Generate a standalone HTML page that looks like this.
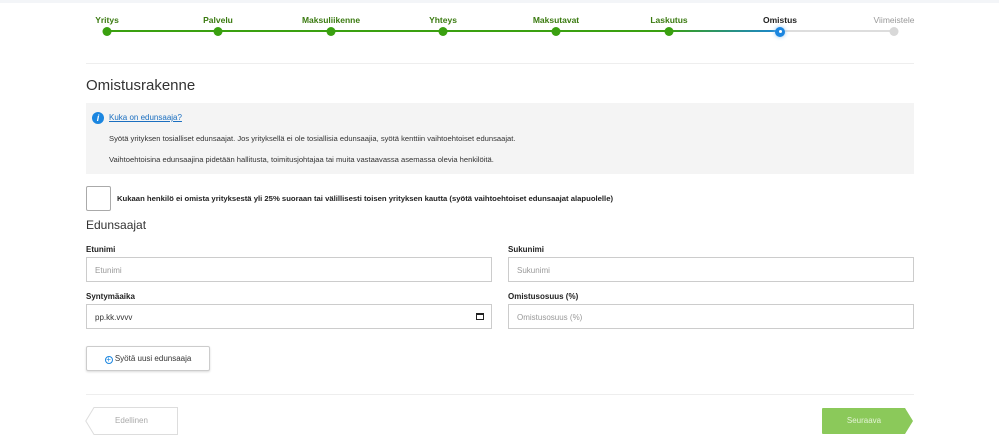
<!DOCTYPE html>
<html><head><meta charset="utf-8"><style>
*{box-sizing:border-box;margin:0;padding:0}
body{width:999px;height:442px;background:#fff;font-family:"Liberation Sans",sans-serif;color:#222;position:relative;overflow:hidden}
.a{position:absolute}
.lbl{font-size:8.5px;font-weight:bold;transform:translateX(-50%);white-space:nowrap;top:15px}
.dot{width:9px;height:9px;border-radius:50%;background:#3aa010;top:27px;transform:translateX(-50%)}
.inp{border:1px solid #ccc;height:25px;font-size:8px;color:#999;padding:8px 0 0 8px}
.fl{font-size:8px;font-weight:bold}
</style></head><body>
<div class="a" style="left:0;top:0;width:999px;height:3px;background:#f3f5f8"></div>
<div class="a" style="left:107px;top:30px;width:560px;height:2px;background:#3aa010"></div>
<div class="a" style="left:667px;top:30px;width:113px;height:2px;background:linear-gradient(90deg,#3aa010,#1b86d6)"></div>
<div class="a" style="left:780px;top:30px;width:114px;height:2px;background:#ddd"></div>
<div class="a lbl" style="left:107px;color:#3a7a10">Yritys</div>
<div class="a lbl" style="left:218px;color:#3a7a10">Palvelu</div>
<div class="a lbl" style="left:331px;color:#3a7a10">Maksuliikenne</div>
<div class="a lbl" style="left:443px;color:#3a7a10">Yhteys</div>
<div class="a lbl" style="left:556px;color:#3a7a10">Maksutavat</div>
<div class="a lbl" style="left:669px;color:#3a7a10">Laskutus</div>
<div class="a lbl" style="left:780px;color:#222">Omistus</div>
<div class="a lbl" style="left:894px;color:#999;font-weight:normal">Viimeistele</div>
<div class="a dot" style="left:107px"></div><div class="a dot" style="left:218px"></div><div class="a dot" style="left:331px"></div><div class="a dot" style="left:443px"></div><div class="a dot" style="left:556px"></div><div class="a dot" style="left:669px"></div>
<div class="a dot" style="left:780px;background:#1b86e0;width:10px;height:10px;box-shadow:0 0 4px #8cc4f0"></div>
<div class="a" style="left:779px;top:30px;width:3px;height:3px;border-radius:50%;background:#fff"></div>
<div class="a dot" style="left:894px;background:#d8d8d8"></div>
<div class="a" style="left:86px;top:63px;width:828px;height:1px;background:#eee"></div>
<div class="a" style="left:86px;top:77px;font-size:15px;color:#333">Omistusrakenne</div>
<div class="a" style="left:86px;top:103px;width:828px;height:71px;background:#f4f4f4"></div>
<div class="a" style="left:92px;top:112px;width:12px;height:12px;border-radius:50%;background:#1b86e0;color:#fff;font-size:9px;font-weight:bold;font-style:italic;text-align:center;line-height:12px">i</div>
<div class="a" style="left:109px;top:113px;font-size:8px;color:#1b6fc0;text-decoration:underline">Kuka on edunsaaja?</div>
<div class="a" style="left:109px;top:134px;font-size:7.6px;color:#333">Syötä yrityksen tosialliset edunsaajat. Jos yrityksellä ei ole tosiallisia edunsaajia, syötä kenttiin vaihtoehtoiset edunsaajat.</div>
<div class="a" style="left:109px;top:155px;font-size:7.6px;color:#333">Vaihtoehtoisina edunsaajina pidetään hallitusta, toimitusjohtajaa tai muita vastaavassa asemassa olevia henkilöitä.</div>
<div class="a" style="left:86px;top:186px;width:25px;height:25px;border:1px solid #aaa;border-radius:2px"></div>
<div class="a" style="left:117px;top:194px;font-size:7.7px;font-weight:bold">Kukaan henkilö ei omista yrityksestä yli 25% suoraan tai välillisesti toisen yrityksen kautta (syötä vaihtoehtoiset edunsaajat alapuolelle)</div>
<div class="a" style="left:86px;top:218px;font-size:12px;color:#333">Edunsaajat</div>
<div class="a fl" style="left:86px;top:245px">Etunimi</div>
<div class="a fl" style="left:508px;top:245px">Sukunimi</div>
<div class="a inp" style="left:86px;top:257px;width:406px">Etunimi</div>
<div class="a inp" style="left:508px;top:257px;width:406px">Sukunimi</div>
<div class="a fl" style="left:86px;top:292px">Syntymäaika</div>
<div class="a fl" style="left:508px;top:292px">Omistusosuus (%)</div>
<div class="a inp" style="left:86px;top:304px;width:406px;color:#333">pp.kk.vvvv</div>
<div class="a" style="left:476px;top:313px;width:8px;height:7px;border:1px solid #222;border-top-width:2px"></div>
<div class="a inp" style="left:508px;top:304px;width:406px">Omistusosuus (%)</div>
<div class="a" style="left:86px;top:346px;width:124px;height:25px;border:1px solid #ccc;border-radius:2px;box-shadow:0 1px 2px rgba(0,0,0,.15);font-size:8px;color:#333;text-align:center;line-height:23px"><span style="display:inline-block;width:8px;height:8px;border:1px solid #1b86e0;border-radius:50%;color:#1b86e0;font-size:8px;line-height:6px;vertical-align:-1px">+</span> Syötä uusi edunsaaja</div>
<div class="a" style="left:86px;top:394px;width:828px;height:1px;background:#eee"></div>
<svg class="a" style="left:85px;top:407px" width="94" height="28"><path d="M9 .5H92.5V27.5H9L.8 14Z" fill="#fff" stroke="#ddd"/></svg>
<div class="a" style="left:86px;top:416px;width:91px;text-align:center;font-size:8px;color:#aaa">Edellinen</div>
<svg class="a" style="left:822px;top:408px" width="92" height="26"><path d="M0 1Q0 0 1 0H83L91 13L83 26H1Q0 26 0 25Z" fill="#8bc95a"/></svg>
<div class="a" style="left:822px;top:416px;width:84px;text-align:center;font-size:8px;color:#e4f3d6">Seuraava</div>
</body></html>
